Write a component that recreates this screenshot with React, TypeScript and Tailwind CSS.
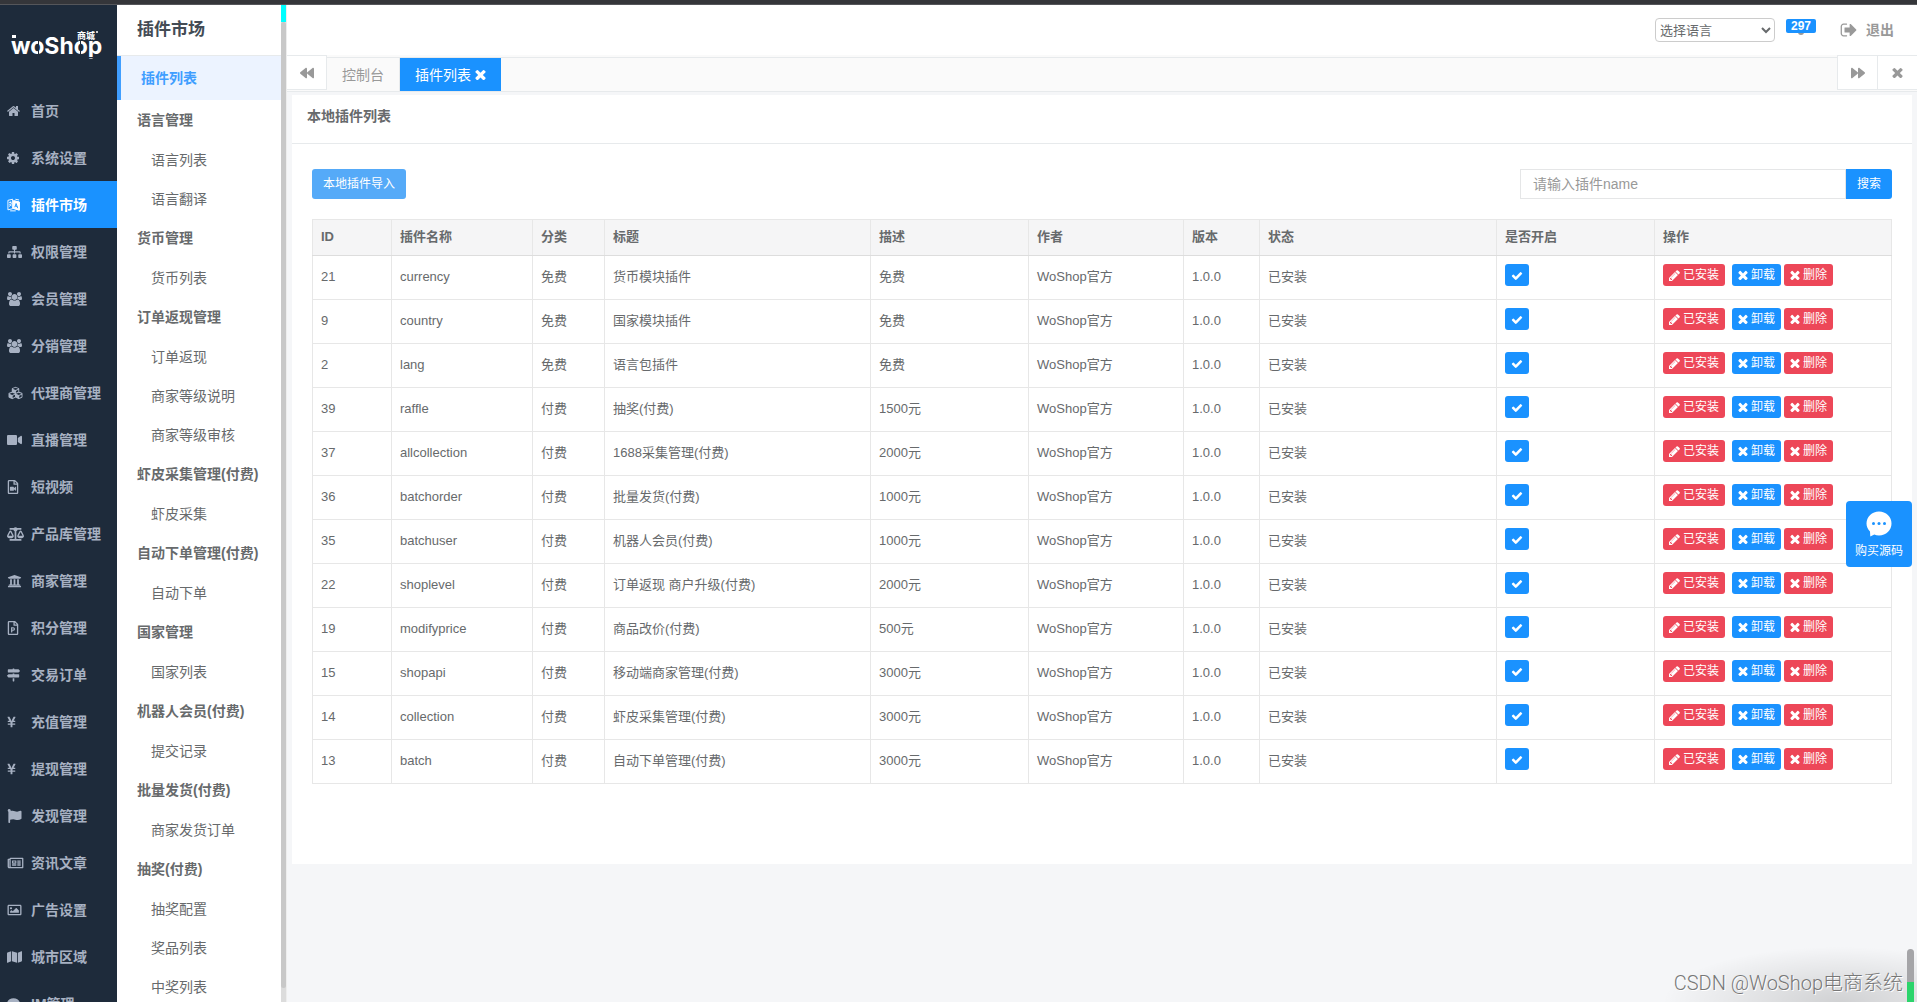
import React from "react";
import {
  FaBackward,
  FaForward,
  FaBalanceScale,
  FaComment,
  FaCubes,
  FaFlag,
  FaMap,
  FaMapSigns,
  FaRegFilePowerpoint,
  FaRegFileVideo,
  FaRegImage,
  FaRegNewspaper,
  FaSitemap,
  FaUniversity,
  FaVideo,
  FaYenSign,
} from "react-icons/fa";

type IconProps = { className?: string };

function Glyph({ d, box = "0 0 1792 1792", className }: IconProps & { d: string; box?: string }) {
  return (
    <svg viewBox={box} className={className} fill="currentColor" aria-hidden="true">
      <path d={d} />
    </svg>
  );
}

const Home = (p: IconProps) => (
  <Glyph
    {...p}
    box="64 64 1664 1664"
    d="M1472 992v480q0 26-19 45t-45 19h-384v-384h-256v384h-384q-26 0-45-19t-19-45v-480q0-1 .5-3t.5-3l575-474 575 474q1 2 1 6zm223-69l-62 74q-8 9-21 11h-3q-13 0-21-7l-692-577-692 577q-12 8-24 7-13-2-21-11l-62-74q-8-10-7-23.5t11-21.5l719-599q32-26 76-26t76 26l244 204v-195q0-14 9-23t23-9h192q14 0 23 9t9 23v408l219 182q10 8 11 21.5t-7 23.5z"
  />
);
const Cog = (p: IconProps) => (
  <Glyph
    {...p}
    box="128 128 1536 1536"
    d="M1152 896q0-106-75-181t-181-75-181 75-75 181 75 181 181 75 181-75 75-181zm512-109v222q0 12-8 23t-20 13l-185 28q-19 54-39 91 35 50 107 138 10 12 10 25t-9 23q-27 37-99 108t-94 71q-12 0-26-9l-138-108q-44 23-91 38-16 136-29 186-7 28-36 28h-222q-14 0-24.5-8.5t-11.5-21.5l-28-184q-49-16-90-37l-141 107q-10 9-25 9-14 0-25-11-126-114-165-168-7-10-7-23 0-12 8-23 15-21 51-66.5t54-70.5q-27-50-41-99l-183-27q-13-2-21-12.5t-8-23.5v-222q0-12 8-23t19-13l186-28q14-46 39-92-40-57-107-138-10-12-10-24 0-10 9-23 26-36 98.5-107.5t94.5-71.5q13 0 26 10l138 107q44-23 91-38 16-136 29-186 7-28 36-28h222q14 0 24.5 8.5t11.5 21.5l28 184q49 16 90 37l142-107q9-9 24-9 13 0 25 10 129 119 165 170 7 8 7 22 0 12-8 23-15 21-51 66.5t-54 70.5q26 50 41 98l183 28q13 2 21 12.5t8 23.5z"
  />
);
const Users = (p: IconProps) => (
  <Glyph
    {...p}
    box="0 0 1920 1792"
    d="M593 896q-162 5-265 128h-134q-82 0-138-40.5t-56-118.5q0-353 124-353 6 0 43.5 21t97.5 42.5 119 21.5q67 0 133-23-5 37-5 66 0 139 81 256zm1071 637q0 120-73 189.5t-194 69.5h-874q-121 0-194-69.5t-73-189.5q0-53 3.5-103.5t14-109 26.5-108.5 43-97.5 62-81 85.5-53.5 111.5-20q10 0 43 21.5t73 48 107 48 135 21.5 135-21.5 107-48 73-48 43-21.5q61 0 111.5 20t85.5 53.5 62 81 43 97.5 26.5 108.5 14 109 3.5 103.5zm-1024-1277q0 106-75 181t-181 75-181-75-75-181 75-181 181-75 181 75 75 181zm704 384q0 159-112.5 271.5t-271.5 112.5-271.5-112.5-112.5-271.5 112.5-271.5 271.5-112.5 271.5 112.5 112.5 271.5zm576 225q0 78-56 118.5t-138 40.5h-134q-103-123-265-128 81-117 81-256 0-29-5-66 66 23 133 23 59 0 119-21.5t97.5-42.5 43.5-21q124 0 124 353zm-128-609q0 106-75 181t-181 75-181-75-75-181 75-181 181-75 181 75 75 181z"
  />
);
const Times = (p: IconProps) => (
  <Glyph
    {...p}
    box="256 256 1280 1280"
    d="M1490 1322q0 40-28 68l-136 136q-28 28-68 28t-68-28l-294-294-294 294q-28 28-68 28t-68-28l-136-136q-28-28-28-68t28-68l294-294-294-294q-28-28-28-68t28-68l136-136q28-28 68-28t68 28l294 294 294-294q28-28 68-28t68 28l136 136q28 28 28 68t-28 68l-294 294 294 294q28 28 28 68z"
  />
);
const Pencil = (p: IconProps) => (
  <Glyph
    {...p}
    box="128 128 1536 1536"
    d="M491 1536l91-91-235-235-91 91v107h128v128h107zm523-928q0-22-22-22-10 0-17 7l-542 542q-7 7-7 17 0 22 22 22 10 0 17-7l542-542q7-7 7-17zm-54-192l416 416-832 832h-416v-416zm683 96q0 53-37 90l-166 166-416-416 166-165q36-38 90-38 53 0 91 38l235 234q37 39 37 91z"
  />
);
const Check = (p: IconProps) => (
  <Glyph
    {...p}
    d="M1671 694q0 40-28 68l-724 724-136 136q-28 28-68 28t-68-28l-136-136-362-362q-28-28-28-68t28-68l136-136q28-28 68-28t68 28l294 295 656-657q28-28 68-28t68 28l136 136q28 28 28 68z"
  />
);
const SignOut = (p: IconProps) => (
  <Glyph
    {...p}
    d="M704 1440q0 4 1 20t.5 26.5-3 23.5-10 19.5-20.5 6.5h-320q-119 0-203.5-84.5t-84.5-203.5v-704q0-119 84.5-203.5t203.5-84.5h320q13 0 22.5 9.5t9.5 22.5q0 4 1 20t.5 26.5-3 23.5-10 19.5-20.5 6.5h-320q-66 0-113 47t-47 113v704q0 66 47 113t113 47h312l11.5 1 11.5 3 8 5.5 7 9 2 13.5zm928-544q0 26-19 45l-544 544q-19 19-45 19t-45-19-19-45v-288h-448q-26 0-45-19t-19-45v-384q0-26 19-45t45-19h448v-288q0-26 19-45t45-19 45 19l544 544q19 19 19 45z"
  />
);
const Language = ({ className }: IconProps) => (
  <svg viewBox="0 0 14 14" className={className} fill="none" stroke="currentColor" strokeWidth="1" aria-hidden="true">
    <path d="M1 2 L6 .8 V11 L1 12.2 Z M2.2 4.6 L5 4 M3.6 3.2 V5 M2.2 8.6 Q4.4 7.6 4.8 5 M2.6 6 L5 8.4" />
    <path d="M7 2.4 L13.4 3.8 V12.6 L6 10.4 M9 .8 L13 1.6" />
    <path d="M7 2.4 L13 3.8 V12.4 L7 10.6 Z" fill="currentColor" />
    <path d="M8.4 9.4 L9.8 5.4 L11.5 10.4 M9 8 L11 8.6" stroke="#1a92ff" />
    <path d="M3.4 13.3 H9.4" />
  </svg>
);
const ChatBubble = ({ className }: IconProps) => (
  <svg viewBox="0 0 26 26" className={className} aria-hidden="true">
    <path fill="currentColor" d="M13 .5c7 0 12.5 5.2 12.5 12S20 24.500 13 24.500c-1.700 0-3.300-.3-4.700-.9L4.300 25.600 4 20.400C1.800 18.300.5 15.600.5 12.500.5 5.700 6 .5 13 .5z" />
    <g fill="#1a92ff">
      <circle cx="7.500" cy="12.500" r="1.500" />
      <circle cx="13" cy="12.500" r="1.500" />
      <circle cx="18.500" cy="12.500" r="1.500" />
    </g>
  </svg>
);

const narrow = "h-3 w-[9px]";
const file = "h-[14px] w-3";
const square = "h-[14px] w-[13px]";
const medium = "h-[14px] w-[15px]";
const wide = "h-[14px] w-[17px]";

const mainMenu: { label: string; icon: React.ComponentType<IconProps>; size: string; active?: boolean }[] = [
  { label: "首页", icon: Home, size: square },
  { label: "系统设置", icon: Cog, size: "h-3 w-3" },
  { label: "插件市场", icon: Language, size: square, active: true },
  { label: "权限管理", icon: FaSitemap, size: medium },
  { label: "会员管理", icon: Users, size: medium },
  { label: "分销管理", icon: Users, size: medium },
  { label: "代理商管理", icon: FaCubes, size: wide },
  { label: "直播管理", icon: FaVideo, size: medium },
  { label: "短视频", icon: FaRegFileVideo, size: file },
  { label: "产品库管理", icon: FaBalanceScale, size: wide },
  { label: "商家管理", icon: FaUniversity, size: medium },
  { label: "积分管理", icon: FaRegFilePowerpoint, size: file },
  { label: "交易订单", icon: FaMapSigns, size: square },
  { label: "充值管理", icon: FaYenSign, size: narrow },
  { label: "提现管理", icon: FaYenSign, size: narrow },
  { label: "发现管理", icon: FaFlag, size: medium },
  { label: "资讯文章", icon: FaRegNewspaper, size: wide },
  { label: "广告设置", icon: FaRegImage, size: medium },
  { label: "城市区域", icon: FaMap, size: medium },
  { label: "IM管理", icon: FaComment, size: square },
];

const subMenu: { title: string; items: string[] }[] = [
  { title: "语言管理", items: ["语言列表", "语言翻译"] },
  { title: "货币管理", items: ["货币列表"] },
  { title: "订单返现管理", items: ["订单返现", "商家等级说明", "商家等级审核"] },
  { title: "虾皮采集管理(付费)", items: ["虾皮采集"] },
  { title: "自动下单管理(付费)", items: ["自动下单"] },
  { title: "国家管理", items: ["国家列表"] },
  { title: "机器人会员(付费)", items: ["提交记录"] },
  { title: "批量发货(付费)", items: ["商家发货订单"] },
  { title: "抽奖(付费)", items: ["抽奖配置", "奖品列表", "中奖列表"] },
];

const headings = ["ID", "插件名称", "分类", "标题", "描述", "作者", "版本", "状态", "是否开启", "操作"];

const plugins = [
  ["21", "currency", "免费", "货币模块插件", "免费"],
  ["9", "country", "免费", "国家模块插件", "免费"],
  ["2", "lang", "免费", "语言包插件", "免费"],
  ["39", "raffle", "付费", "抽奖(付费)", "1500元"],
  ["37", "allcollection", "付费", "1688采集管理(付费)", "2000元"],
  ["36", "batchorder", "付费", "批量发货(付费)", "1000元"],
  ["35", "batchuser", "付费", "机器人会员(付费)", "1000元"],
  ["22", "shoplevel", "付费", "订单返现 商户升级(付费)", "2000元"],
  ["19", "modifyprice", "付费", "商品改价(付费)", "500元"],
  ["15", "shopapi", "付费", "移动端商家管理(付费)", "3000元"],
  ["14", "collection", "付费", "虾皮采集管理(付费)", "3000元"],
  ["13", "batch", "付费", "自动下单管理(付费)", "3000元"],
];

function Logo() {
  return (
    <svg viewBox="0 0 117 82" className="h-[82px] w-full shrink-0 fill-white" role="img" aria-label="WoShop商城">
      <text x="11" y="49" fontSize="23" fontWeight="700" fontFamily="Inter, 'Noto Sans', sans-serif">
        woShop
      </text>
      <rect x="12" y="30" width="4" height="3" />
      <g className="fill-[#1e2b3b]">
        <rect x="38" y="35" width="1" height="16" />
        <rect x="80" y="35" width="1" height="16" />
        <rect x="87" y="52" width="6" height="1" />
      </g>
      <text x="77" y="34" fontSize="9" fontWeight="700" fontFamily="'Noto Sans CJK SC', sans-serif">
        商城
      </text>
      <circle cx="97" cy="27" r="1" />
    </svg>
  );
}

function MainSidebar() {
  return (
    <aside className="w-[117px] shrink-0 overflow-hidden bg-[#1e2b3b]">
      <Logo />
      <nav>
        {mainMenu.map(({ label, icon: Icon, size, active }) => (
          <a
            key={label}
            href="#"
            className={
              active
                ? "flex h-[47px] items-center bg-[#1a92ff] pl-[7px] font-bold text-white"
                : "flex h-[47px] items-center pl-[7px] font-bold text-[#a7b1c2]"
            }
          >
            <span className="flex w-6 shrink-0">
              <Icon className={size} />
            </span>
            {label}
          </a>
        ))}
      </nav>
    </aside>
  );
}

function SubSidebar() {
  return (
    <aside className="flex w-[169px] shrink-0 overflow-hidden bg-white">
      <nav className="w-[164px] shrink-0">
        <h2 className="flex h-[51px] items-center border-b border-[#e7eaec] pl-5 text-[17px] font-bold text-[#444c55]">
          插件市场
        </h2>
        <a href="#" className="flex h-11 items-center border-l-4 border-[#409eff] bg-[#ecf3ff] pl-5 font-bold text-[#409eff]">
          插件列表
        </a>
        {subMenu.map((group) => (
          <section key={group.title}>
            <h3 className="flex h-10 items-center pl-5 font-bold text-[#676a6c]">{group.title}</h3>
            {group.items.map((item) => (
              <a key={item} href="#" className="flex h-[39px] items-center pl-[34px] text-[#676a6c]">
                {item}
              </a>
            ))}
          </section>
        ))}
      </nav>
      <div className="flex w-[5px] flex-col bg-[#dcdcdc]">
        <div className="h-[17px] bg-[#00ffff]" />
        <div className="h-[296px] max-h-[296px] grow rounded-t bg-[#c8c8c8]" />
        <div className="mb-[14px] flex-1 rounded-b bg-[#c8c8c8]" />
      </div>
    </aside>
  );
}

function TopBar() {
  return (
    <header className="flex h-[50px] items-start justify-end bg-white pr-[23px] pt-[13px]">
      <select
        aria-label="选择语言"
        defaultValue="选择语言"
        className="h-6 w-[120px] rounded border border-[#ccc] bg-white text-[13px] text-[#676a6c]"
      >
        <option>选择语言</option>
      </select>
      <a href="#" className="mt-px ml-[11px] flex flex-col items-center text-[#999]">
        <span className="z-10 h-[14px] w-[30px] rounded-xs bg-[#1a92ff] text-center text-xs leading-[14px] font-bold text-white">
          297
        </span>
        <span className="-mt-0.5 h-1 w-[6px] rounded-b-full bg-[#999]" />
      </a>
      <a href="#" className="ml-6 flex h-6 items-center gap-2 font-bold text-[#999]">
        <SignOut className="size-[18px]" />
        退出
      </a>
    </header>
  );
}

function TabBar() {
  return (
    <div className="flex h-[37px] border-b border-[#e7eaec] bg-[#fafafa]">
      <button aria-label="向左滚动" className="flex h-[35px] w-10 items-center justify-center border-y border-r border-[#e7eaec] bg-white text-[#999]">
        <FaBackward className="size-[14px]" />
      </button>
      <div className="mt-[2px] flex min-w-0 flex-1 border-t border-[#e7eaec]">
        <a href="#" className="flex h-full items-center border-r border-[#e7eaec] px-[15px] text-[#999]">
          控制台
        </a>
        <div className="flex h-full items-center gap-1 bg-[#1a92ff] px-[15px] text-white">
          <a href="#">插件列表</a>
          <button aria-label="关闭插件列表">
            <Times className="size-[11px]" />
          </button>
        </div>
      </div>
      <button aria-label="向右滚动" className="flex h-[35px] w-[41px] items-center justify-center border border-[#e7eaec] bg-white text-[#999]">
        <FaForward className="size-[14px]" />
      </button>
      <button aria-label="关闭标签" className="flex h-[35px] w-[39px] items-center justify-center border-y border-[#e7eaec] bg-white text-[#999]">
        <Times className="size-[11px]" />
      </button>
    </div>
  );
}

function ActionButton({ tone, icon: Icon, label }: { tone: string; icon: React.ComponentType<IconProps>; label: string }) {
  return (
    <button className={`flex h-[22px] items-center gap-[3px] rounded-[3px] px-[6px] text-xs whitespace-nowrap text-white ${tone}`}>
      <Icon className={label === "已安装" ? "size-[11px]" : "size-[10px]"} />
      {label}
    </button>
  );
}

function PluginTable() {
  return (
    <table className="w-full table-fixed border-collapse text-[13px]">
      <colgroup>
        <col className="w-[79px]" />
        <col className="w-[141px]" />
        <col className="w-[72px]" />
        <col className="w-[266px]" />
        <col className="w-[158px]" />
        <col className="w-[155px]" />
        <col className="w-[76px]" />
        <col className="w-[237px]" />
        <col className="w-[158px]" />
        <col className="w-[237px]" />
      </colgroup>
      <thead>
        <tr className="h-9 bg-[#f5f5f6]">
          {headings.map((h) => (
            <th key={h} scope="col" className="border border-b-[#ddd] border-[#e7e7e7] px-2 text-left font-bold">
              {h}
            </th>
          ))}
        </tr>
      </thead>
      <tbody>
        {plugins.map((row) => (
          <tr key={row[0]} className="h-11">
            {[...row, "WoShop官方", "1.0.0", "已安装"].map((cell, i) => (
              <td key={i} className="border border-[#e7e7e7] px-2">
                {cell}
              </td>
            ))}
            <td className="border border-[#e7e7e7] px-2 pt-2 align-top">
              <label className="relative flex h-[22px] w-6 items-center justify-center rounded-[3px] bg-[#1a92ff] text-white">
                <input
                  type="checkbox"
                  defaultChecked
                  aria-label={`启用 ${row[1]}`}
                  className="peer absolute inset-0 appearance-none"
                />
                <Check className="invisible size-3 peer-checked:visible" />
              </label>
            </td>
            <td className="border border-[#e7e7e7] px-2 pt-2 align-top">
              <div className="flex">
                <ActionButton tone="bg-[#ed4758] mr-[7px]" icon={Pencil} label="已安装" />
                <ActionButton tone="bg-[#1a92ff] mr-[3px]" icon={Times} label="卸载" />
                <ActionButton tone="bg-[#ed4758]" icon={Times} label="删除" />
              </div>
            </td>
          </tr>
        ))}
      </tbody>
    </table>
  );
}

export default function App() {
  return (
    <div className="relative flex h-screen flex-col overflow-hidden bg-[#f5f6f8] font-['Liberation_Sans','Noto_Sans_CJK_SC',sans-serif] text-sm text-[#676a6c]">
      <div className="h-[5px] shrink-0 border-b border-[#55565a] bg-[#35363a]" />
      <div className="flex min-h-0 flex-1">
        <MainSidebar />
        <SubSidebar />
        <main className="flex min-w-0 flex-1 flex-col border-l border-[#ededed]">
          <TopBar />
          <TabBar />
          <section className="mx-[5px] mt-[3px] bg-white pb-20">
            <h1 className="flex h-[49px] items-start border-b border-[#e7eaec] px-[15px] pt-[11px] leading-5 font-bold">本地插件列表</h1>
            <div className="px-5 pt-[25px]">
              <div className="mb-5 flex h-[30px] justify-between">
                <button className="rounded-[3px] bg-[#55aaf8] px-[11px] text-xs text-white">本地插件导入</button>
                <form className="flex" onSubmit={(e) => e.preventDefault()}>
                  <input
                    type="text"
                    aria-label="插件name"
                    placeholder="请输入插件name"
                    className="w-[326px] border border-[#e5e6e7] px-3 placeholder:text-[#999]"
                  />
                  <button className="w-[46px] rounded-r-[3px] bg-[#1a92ff] text-xs text-white">搜索</button>
                </form>
              </div>
              <PluginTable />
            </div>
          </section>
        </main>
      </div>
      <button className="absolute top-[501px] right-[5px] flex size-[66px] flex-col items-center rounded bg-[#1a92ff] pt-[10px] text-xs text-white">
        <ChatBubble className="size-[26px]" />
        <span className="mt-[6px]">购买源码</span>
      </button>
      <div className="pointer-events-none absolute right-0 bottom-0 h-14 w-64 bg-radial-[at_70%_100%] from-black/15 to-transparent to-70%" />
      <div className="absolute right-[3px] bottom-0 flex h-[53px] w-[7px] flex-col overflow-hidden rounded-t bg-[#a5a5a8]">
        <div className="mt-auto h-5 bg-[#2bd46b]" />
      </div>
      <p className="absolute right-[14px] bottom-[5px] font-['Roboto','Noto_Sans_CJK_SC',sans-serif] text-xl leading-7 font-light text-[#777] [text-shadow:1px_1px_0_#fff]">
        CSDN @WoShop电商系统
      </p>
    </div>
  );
}
